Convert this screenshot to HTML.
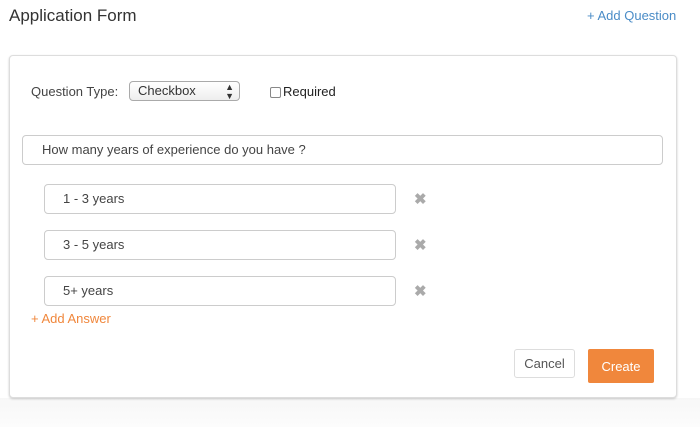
<!DOCTYPE html>
<html><head><style>
body{margin:0;width:700px;height:427px;background:#fff;font-family:"Liberation Sans",sans-serif;position:relative;overflow:hidden;color:#333}
.a{position:absolute}
.inp{position:absolute;border:1px solid #ccc;border-radius:4px;background:#fff;box-sizing:border-box;font-size:13px;color:#444;line-height:27px}
.x{position:absolute;color:#aaa;font-size:15px;font-weight:bold}
</style></head><body>
<div class="a" style="left:0;top:398px;width:700px;height:29px;background:linear-gradient(#f7f7f7,#fcfcfc)"></div>
<div class="a" style="left:9px;top:6px;font-size:17px;color:#333">Application Form</div>
<div class="a" style="left:587px;top:8px;font-size:13px;color:#4a8cc7">+ Add Question</div>
<div class="a" style="left:9px;top:55px;width:666px;height:341px;border:1px solid #ddd;border-radius:4px;box-shadow:0 1px 2px rgba(0,0,0,.2);background:#fff"></div>
<div class="a" style="left:31px;top:84px;font-size:13px;color:#444">Question Type:</div>
<div class="a" style="left:129px;top:81px;width:111px;height:20px;box-sizing:border-box;border:1px solid #aaa;border-radius:4px;background:linear-gradient(#fff,#eee);font-size:13px;line-height:18px;padding-left:8px;color:#333">Checkbox<span style="position:absolute;right:5px;top:1px;font-size:9px;line-height:9px">▲<br>▼</span></div>
<div class="a" style="left:270px;top:87px;width:9px;height:9px;border:1px solid #888;border-radius:2px"></div>
<div class="a" style="left:283px;top:84px;font-size:13px;color:#222">Required</div>
<div class="inp" style="left:22px;top:135px;width:641px;height:30px;padding-left:19px">How many years of experience do you have ?</div>
<div class="inp" style="left:44px;top:184px;width:352px;height:30px;padding-left:18px">1 - 3 years</div>
<div class="inp" style="left:44px;top:230px;width:352px;height:30px;padding-left:18px">3 - 5 years</div>
<div class="inp" style="left:44px;top:276px;width:352px;height:30px;padding-left:18px">5+ years</div>
<div class="x" style="left:414px;top:190px">✖</div>
<div class="x" style="left:414px;top:236px">✖</div>
<div class="x" style="left:414px;top:282px">✖</div>
<div class="a" style="left:31px;top:311px;font-size:13px;color:#f0873c">+ Add Answer</div>
<div class="a" style="left:514px;top:349px;width:61px;height:29px;box-sizing:border-box;border:1px solid #ddd;border-radius:3px;font-size:13px;color:#555;text-align:center;line-height:27px">Cancel</div>
<div class="a" style="left:588px;top:349px;width:66px;height:34px;background:#f0873c;border-radius:2px;font-size:13px;color:#fff;text-align:center;line-height:36px">Create</div>
</body></html>
